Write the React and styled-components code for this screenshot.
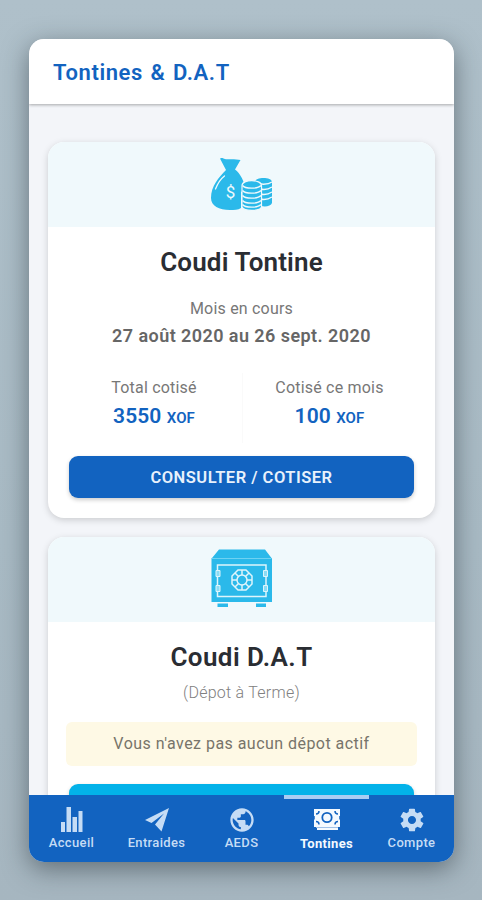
import React from 'react';
import styled, { createGlobalStyle } from 'styled-components';
import { IoMdSettings } from 'react-icons/io';
import { MdPublic } from 'react-icons/md';

const BLUE = '#1263c0';
const CYAN = '#2bb9ea';

const MoneyBagIcon = () => (
  <svg width="64" height="54" viewBox="0 0 64 54">
    <path
      fill={CYAN}
      d="M10.500 1.500C9.500 0 11.500-.5 13 .3C16 2 18 1 21 1.200C25 1.300 28 1.500 30.500 2L25 11.500C30 15 35 24 35 31.500L31 34V50C28 52 24 52 20 52C9 52 1 48 1 40C1 28 9 19 16 12Z"
    />
    <path
      fill="none"
      stroke="#f0f9fc"
      strokeWidth="1.300"
      strokeLinecap="round"
      d="M5.500 31C7.500 26 10.500 21 14.500 18"
    />
    <text
      x="20.500"
      y="40"
      fill="#f0f9fc"
      fontFamily="Roboto"
      fontSize="17"
      textAnchor="middle"
    >
      $
    </text>
    <path fill={CYAN} d="M45 24C45 18.500 62 18.500 62 24V45C61 48 56 49 51 48V28Z" />
    <path
      fill="none"
      stroke="#f0f9fc"
      strokeWidth="1.300"
      d="M45 24C49 27 58 27 62 24M50 31C54 32 59 31 62 29M50 36C54 37 59 36 62 34M50 41C54 42 59 41 62 39"
    />
    <path
      fill={CYAN}
      stroke="#f0f9fc"
      strokeWidth="1.200"
      d="M32 27.500C32 21 51.500 21 51.500 27.500V49C50 53.500 34 53.500 32 49Z"
    />
    <path
      fill="none"
      stroke="#f0f9fc"
      strokeWidth="1.300"
      d="M32.500 27.500C35 31 48 31 51 27.500M32.500 32.500C35 36 48 36 51 32.500M32.500 37.500C35 41 48 41 51 37.500M32.500 42.500C35 46 48 46 51 42.500M32.500 46.500C35 50 48 50 51 46.500"
    />
  </svg>
);

const SafeIcon = () => (
  <svg width="62" height="59" viewBox="0 0 62 59">
    <path fill={CYAN} d="M8 .5H54L60.500 9H61V53H.5V9H1ZM6.500 54.500H17V58H6.500ZM45 54.500H55V58H45Z" />
    <path stroke="#6dd2f2" d="M1 9.500H60.500" />
    <g fill="none" stroke="#def5fc" strokeWidth="1.500">
      <path d="M6.500 16H55V47.500H6.500Z" />
      <path d="M27 21H35L41 27V35L35 41H27L21 35V27Z" />
      <circle cx="31" cy="31" r="5" />
      <path d="M31 21V26M31 36V41M21 31H26M36 31H41M24 24L27.500 27.500M34.500 34.500L38 38M38 24L34.500 27.500M27.500 34.500L24 38" />
    </g>
    <g fill="#8bdcf5" stroke="#def5fc">
      <path d="M5 21.500H9V27.500H5ZM5 36.500H9V42.500H5ZM52.500 21.500H56.500V27.500H52.500ZM52.500 36.500H56.500V42.500H52.500Z" />
    </g>
  </svg>
);

const StatsIcon = () => (
  <svg width="24" height="26" viewBox="0 0 24 26">
    <path fill="currentColor" d="M1 15H5V25H1ZM6.500 0H11V25H6.500ZM12.500 10H17V25H12.500ZM18.500 4H22.500V25H18.500Z" />
  </svg>
);

const PlaneIcon = () => (
  <svg width="26" height="24" viewBox="0 0 26 24">
    <path fill="currentColor" d="M25 0L1 12L7.500 15L20 5.500L11 16.500L17.500 23.500Z" />
  </svg>
);

const CashIcon = () => (
  <svg width="26" height="22" viewBox="0 0 26 22">
    <path fill="currentColor" d="M0 0H26V18H24V21H3V18H0Z" />
    <path stroke="#9fc1e8" d="M2 18.500H24" />
    <circle cx="13" cy="8.500" r="4.700" fill="none" stroke={BLUE} strokeWidth="1.800" />
    <path
      fill="none"
      stroke={BLUE}
      strokeWidth="1.500"
      d="M2 5C4 5 5 4 5 2M21 2C21 4 22 5 24 5M2 12.500C4 12.500 5 13.500 5 15.500M21 15.500C21 13.500 22 12.500 24 12.500M0 7V10.500M26 7V10.500"
    />
  </svg>
);

const tabs = [
  { label: 'Accueil', icon: <StatsIcon /> },
  { label: 'Entraides', icon: <PlaneIcon /> },
  { label: 'AEDS', icon: <MdPublic size={28} /> },
  { label: 'Tontines', icon: <CashIcon />, active: true },
  { label: 'Compte', icon: <IoMdSettings size={28} /> },
];

const App = () => {
  return (
    <Page>
      <GlobalStyle />
      <Phone>
        <Header>
          <HeaderTitle>Tontines &amp; D.A.T</HeaderTitle>
        </Header>

        <Content>
          <Card $height="376px">
            <CardBanner $top="16px">
              <MoneyBagIcon />
            </CardBanner>
            <CardTitle $spacing="0.15px">Coudi Tontine</CardTitle>
            <Label $top="16px">Mois en cours</Label>
            <Period>27 août 2020 au 26 sept. 2020</Period>
            <Totals>
              <Total>
                <Label>Total cotisé</Label>
                <Amount>
                  3550 <Currency>XOF</Currency>
                </Amount>
              </Total>
              <Total>
                <Label>Cotisé ce mois</Label>
                <Amount>
                  100 <Currency>XOF</Currency>
                </Amount>
              </Total>
            </Totals>
            <Button>CONSULTER / COTISER</Button>
          </Card>

          <Card $height="340px">
            <CardBanner $top="12px">
              <SafeIcon />
            </CardBanner>
            <CardTitle $spacing="0.4px">Coudi D.A.T</CardTitle>
            <Hint>(Dépot à Terme)</Hint>
            <Notice>Vous n'avez pas aucun dépot actif</Notice>
            <Button $color="#03b2e9" />
          </Card>
        </Content>

        <TabBar>
          {tabs.map(({ label, icon, active }) => (
            <Tab key={label} $active={active}>
              <TabIcon>{icon}</TabIcon>
              <TabLabel $active={active}>{label}</TabLabel>
            </Tab>
          ))}
        </TabBar>
      </Phone>
    </Page>
  );
};

const GlobalStyle = createGlobalStyle`
  * {
    box-sizing: border-box;
  }

  body {
    margin: 0;
    font-family: Roboto, sans-serif;
  }
`;

const Page = styled.div`
  height: 900px;
  padding: 39px 28px 38px 29px;
  overflow: hidden;
  background: linear-gradient(180deg, #afc0ca 0%, #a8bac4 60%, #a6b6c0 100%);
`;

const Phone = styled.div`
  display: flex;
  flex-direction: column;
  height: 823px;
  border-radius: 15px;
  overflow: hidden;
  background: #f3f5f9;
  box-shadow: 0 7px 26px rgba(30, 40, 45, 0.5);
`;

const Header = styled.header`
  position: relative;
  display: flex;
  align-items: center;
  flex: none;
  height: 65px;
  padding: 2px 24px 0;
  background: #fff;
  box-shadow: 0 1px 3px rgba(0, 0, 0, 0.32);
`;

const HeaderTitle = styled.h1`
  margin: 0;
  font-size: 22px;
  font-weight: 600;
  letter-spacing: 0.6px;
  word-spacing: 1.5px;
  color: ${BLUE};
  white-space: nowrap;
`;

const Content = styled.main`
  flex: 1;
  min-height: 0;
  padding: 38px 19px 0;
  overflow: hidden;
`;

const Card = styled.section`
  display: flex;
  flex-direction: column;
  height: ${({ $height }) => $height};
  margin-bottom: 19px;
  border-radius: 16px;
  overflow: hidden;
  background: #fff;
  box-shadow: 0 2px 7px rgba(0, 0, 0, 0.17);
`;

const CardBanner = styled.div`
  display: flex;
  justify-content: center;
  flex: none;
  height: 85px;
  padding-top: ${({ $top }) => $top};
  background: #f0f9fc;
`;

const CardTitle = styled.h2`
  margin: 19px 0 0;
  font-size: 26px;
  font-weight: 600;
  line-height: 32px;
  letter-spacing: ${({ $spacing }) => $spacing};
  text-align: center;
  color: #2a2d33;
`;

const Label = styled.div`
  margin-top: ${({ $top }) => $top || 0};
  font-size: 16px;
  line-height: 30px;
  letter-spacing: 0.2px;
  text-align: center;
  color: #777;
`;

const Period = styled.div`
  font-size: 18px;
  font-weight: 600;
  line-height: 24px;
  letter-spacing: 0.44px;
  text-align: center;
  color: #666;
`;

const Totals = styled.div`
  display: grid;
  grid-template-columns: 175px 175px;
  justify-content: center;
  margin-top: 25px;
`;

const Total = styled.div`
  height: 70px;

  & + & {
    border-left: 1px solid #fafafa;
  }
`;

const Amount = styled.div`
  font-size: 21px;
  font-weight: 600;
  line-height: 27px;
  letter-spacing: 0.1px;
  text-align: center;
  color: ${BLUE};
`;

const Currency = styled.span`
  font-size: 15px;
`;

const Button = styled.button`
  flex: none;
  height: 42px;
  margin: 13px 21px 0;
  padding: 0;
  border: 0;
  border-radius: 9px;
  background: ${({ $color }) => $color || BLUE};
  box-shadow: 0 2px 4px rgba(0, 0, 0, 0.2);
  font-family: inherit;
  font-size: 16.500px;
  font-weight: 600;
  letter-spacing: 0.5px;
  color: #e8f1fc;
`;

const Hint = styled.div`
  margin-top: 5px;
  font-size: 16px;
  font-weight: 300;
  line-height: 30px;
  letter-spacing: 0.25px;
  text-align: center;
  color: #808080;
`;

const Notice = styled.div`
  flex: none;
  height: 44px;
  margin: 14px 18px 5px;
  border-radius: 6px;
  background: #fef9e5;
  font-size: 16px;
  line-height: 44px;
  letter-spacing: 0.46px;
  text-align: center;
  color: #77746a;
`;

const TabBar = styled.nav`
  display: grid;
  grid-template-columns: repeat(5, 1fr);
  flex: none;
  height: 67px;
  background: ${BLUE};
`;

const Tab = styled.a`
  display: flex;
  flex-direction: column;
  align-items: center;
  border-top: 4px solid ${({ $active }) => ($active ? '#a9cdf3' : 'transparent')};
  color: ${({ $active }) => ($active ? '#f4faff' : '#c5dcf5')};
`;

const TabIcon = styled.div`
  display: flex;
  align-items: center;
  justify-content: center;
  height: 28px;
  margin-top: 7px;
`;

const TabLabel = styled.span`
  margin-top: ${({ $active }) => ($active ? '2px' : '1px')};
  font-size: 13px;
  font-weight: ${({ $active }) => ($active ? 700 : 500)};
  line-height: 16px;
  letter-spacing: 0.35px;
`;

export default App;
